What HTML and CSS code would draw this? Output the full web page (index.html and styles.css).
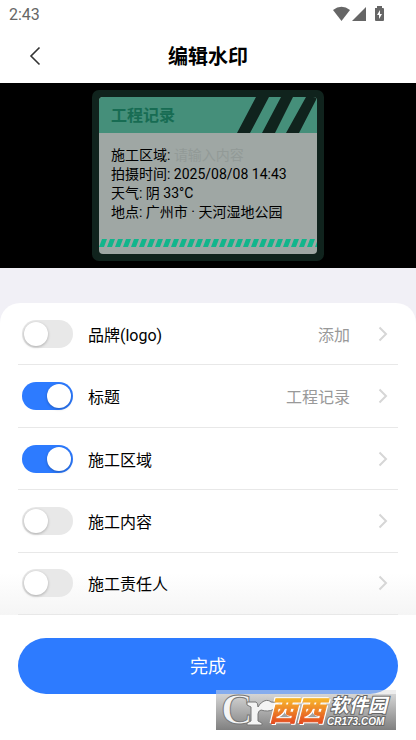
FILE: index.html
```html
<!DOCTYPE html>
<html lang="zh-CN">
<head>
<meta charset="utf-8">
<meta name="viewport" content="width=device-width, initial-scale=1">
<title>编辑水印</title>
<link rel="stylesheet" href="styles.css">
</head>
<body>
<div class="status">
  <span>2:43</span>
  <svg class="status-icons" width="51" height="16" viewBox="0 0 51 16" aria-hidden="true">
    <path d="M0 4Q8.500-2.500 17 4L8.500 15Z"/>
    <path d="M33 1V15H19Z"/>
    <path fill-rule="evenodd" d="M42 2h2V0h5v2h1q1 0 1 1v11q0 1-1 1h-7q-1 0-1-1ZM47 4l-3 5h2v4l3-5h-2Z"/>
  </svg>
</div>
<header class="topbar">
  <button class="back" type="button" aria-label="返回">
    <svg width="12" height="20" viewBox="0 0 12 20" aria-hidden="true"><path d="M10.500 1.500 2 10l8.500 8.500"/></svg>
  </button>
  <h1>编辑水印</h1>
</header>
<section class="preview">
  <div class="frame">
    <div class="card">
      <div class="card-head">
        <h2>工程记录</h2>
        <svg class="slashes" width="80" height="36" viewBox="0 0 80 36" aria-hidden="true">
          <path d="M19 0H32L13 36H0ZM44 0H56L38 36H25ZM69 0H80V1L62 36H49Z"/>
        </svg>
      </div>
      <div class="card-body">
        <p>施工区域: <span class="hint">请输入内容</span></p>
        <p>拍摄时间: 2025/08/08 14:43</p>
        <p>天气: 阴 33°C</p>
        <p>地点: 广州市 · 天河湿地公园</p>
      </div>
      <svg class="tape" height="8" aria-hidden="true">
        <defs><pattern id="tape" width="8" height="8" patternUnits="userSpaceOnUse">
          <path d="M0 8 3 0H8L5 8Z"/>
        </pattern></defs>
        <rect width="100%" height="8" fill="url(#tape)"/>
      </svg>
    </div>
  </div>
</section>
<main class="sheet">
  <div class="row">
    <input class="switch" type="checkbox" id="brand">
    <label for="brand">品牌(logo)</label>
    <a class="more" href="#brand"><span>添加</span><svg width="10" height="16" viewBox="0 0 10 16" aria-hidden="true"><path d="M1.500 1.500 8 8l-6.500 6.500"/></svg></a>
  </div>
  <div class="row">
    <input class="switch" type="checkbox" id="title" checked>
    <label for="title">标题</label>
    <a class="more" href="#title"><span>工程记录</span><svg width="10" height="16" viewBox="0 0 10 16" aria-hidden="true"><path d="M1.500 1.500 8 8l-6.500 6.500"/></svg></a>
  </div>
  <div class="row">
    <input class="switch" type="checkbox" id="area" checked>
    <label for="area">施工区域</label>
    <a class="more" href="#area" aria-label="编辑施工区域"><svg width="10" height="16" viewBox="0 0 10 16" aria-hidden="true"><path d="M1.500 1.500 8 8l-6.500 6.500"/></svg></a>
  </div>
  <div class="row">
    <input class="switch" type="checkbox" id="content">
    <label for="content">施工内容</label>
    <a class="more" href="#content" aria-label="编辑施工内容"><svg width="10" height="16" viewBox="0 0 10 16" aria-hidden="true"><path d="M1.500 1.500 8 8l-6.500 6.500"/></svg></a>
  </div>
  <div class="row">
    <input class="switch" type="checkbox" id="owner">
    <label for="owner">施工责任人</label>
    <a class="more" href="#owner" aria-label="编辑施工责任人"><svg width="10" height="16" viewBox="0 0 10 16" aria-hidden="true"><path d="M1.500 1.500 8 8l-6.500 6.500"/></svg></a>
  </div>
</main>
<footer class="footer">
  <button class="done" type="button">完成</button>
  <svg class="badge" width="180" height="40" viewBox="0 0 180 40" role="img" aria-label="西西软件园 CR173.COM">
    <defs>
      <linearGradient id="plate" x2="0" y2="1"><stop offset="0" stop-color="#ddd" stop-opacity=".5"/><stop offset=".1" stop-color="#ddd" stop-opacity=".5"/><stop offset=".11" stop-color="#d4d4d4"/><stop offset="1" stop-color="#808080"/></linearGradient>
      <linearGradient id="orange" gradientUnits="userSpaceOnUse" x1="0" y1="9" x2="0" y2="33"><stop offset="0" stop-color="#f7b52c"/><stop offset="1" stop-color="#e34c20"/></linearGradient>
    </defs>
    <rect width="180" height="40" fill="url(#plate)"/>
    <text class="mark-c" x="5" y="34">C</text>
    <path class="leaf" d="M31 12H40Q42 13 42 17C46 10 52 9 55 12Q59 13 64 11C62 19 54 23 45 20Q42 21 42 24V31L46 33V35H31V33L35 31V17L31 15Z"/>
    <text class="mark-west" x="53" y="31">西西</text>
    <text class="mark-cn" x="114" y="22">软件园</text>
    <text class="mark-url" x="111" y="35">CR173.COM</text>
  </svg>
</footer>
</body>
</html>
```
FILE: styles.css
```css
* { box-sizing: border-box; }

body {
  margin: 0;
  min-height: 100vh;
  display: flex;
  flex-direction: column;
  background: #f1f0f6;
  color: #000;
  font: 16px/24px Roboto, "Noto Sans CJK SC", sans-serif;
}

h1, h2, p { margin: 0; }
button { border: 0; padding: 0; font: inherit; cursor: pointer; }

.status {
  height: 28px;
  padding: 0 32px 0 9px;
  display: flex;
  align-items: center;
  justify-content: space-between;
  background: #fff;
  color: #666;
}
.status span, .topbar h1, .card-head h2, .done { padding-top: 2px; }
.row label, .more span { padding-top: 4px; }
.status-icons { fill: #666; }

.topbar {
  height: 55px;
  padding: 0 20px;
  display: grid;
  grid-template-columns: 30px 1fr 30px;
  align-items: center;
  background: #fff;
}
.topbar h1 { font-size: 20px; line-height: 28px; font-weight: 700; text-align: center; }
.back { display: grid; place-items: center; height: 40px; background: none; }
.back path { fill: none; stroke: #333; stroke-width: 1.6; }

.preview {
  padding: 7px 0;
  display: flex;
  justify-content: center;
  background: #000;
}
.frame {
  width: 232px;
  padding: 7px;
  border-radius: 7px;
  background: #10231d;
}
.card {
  border-radius: 4px;
  background: #9fa7a4;
  overflow: hidden;
}
.card-head {
  height: 36px;
  padding-left: 12px;
  display: flex;
  align-items: center;
  justify-content: space-between;
  background: #458f7a;
}
.card-head h2 { color: #176c53; font-size: 16px; line-height: 24px; }
.slashes { fill: #10231d; }
.card-body { padding: 13px 12px 17px; font-size: 14px; line-height: 19px; }
.hint { color: #929a97; }
.tape { display: block; width: 100%; margin-bottom: 7px; fill: #12b58c; }

.sheet {
  flex: 1;
  margin-top: 35px;
  padding: 0 18px;
  display: flex;
  flex-direction: column;
  border-radius: 20px 20px 0 0;
  background: linear-gradient(to top, #f5f5f5, #fff 42px);
}
.row {
  flex: 1;
  min-height: 56px;
  padding: 0 10px 0 4px;
  display: flex;
  align-items: center;
  gap: 15px;
  border-bottom: 1px solid #e8e8e8;
}
.switch {
  appearance: none;
  width: 51px;
  height: 28px;
  margin: 0;
  padding: 2px;
  display: flex;
  border-radius: 14px;
  background: #e8e8e8;
}
.switch::before {
  content: "";
  width: 24px;
  height: 24px;
  border-radius: 50%;
  background: #fff;
  box-shadow: 0 1px 3px #0004;
}
.switch:checked { justify-content: flex-end; background: #2d7bff; }
.more {
  margin-left: auto;
  display: flex;
  align-items: center;
  gap: 28px;
  color: #999;
  text-decoration: none;
}
.more path { fill: none; stroke: #d6d6d6; stroke-width: 2; }

.footer {
  position: relative;
  padding: 23px 18px 46px;
  background: #fff;
}
.done {
  display: block;
  width: 100%;
  height: 56px;
  border-radius: 28px;
  background: #2d7bff;
  color: #fff;
  font-size: 18px;
}
.badge { position: absolute; right: 20px; bottom: 10px; overflow: visible; }
.mark-c {
  font: 700 44px "Liberation Serif", serif;
  fill: #f4f4f4;
  stroke: #777;
  stroke-width: 1;
}
.leaf { fill: #f4f4f4; stroke: #777; stroke-width: 1; }
.mark-west {
  font: italic 700 28px "Noto Sans CJK SC", sans-serif;
  fill: url(#orange);
  stroke: url(#orange);
  stroke-width: 1;
  filter: drop-shadow(1px 1px 0 #fff) drop-shadow(-1px -1px 0 #fff);
}
.mark-cn, .mark-url { fill: #fff; stroke: #666; stroke-width: 2; paint-order: stroke; font-style: italic; font-weight: 700; }
.mark-cn { font-size: 19px; font-family: "Noto Sans CJK SC", sans-serif; }
.mark-url { font-size: 10px; font-family: "Liberation Sans", sans-serif; }
```
